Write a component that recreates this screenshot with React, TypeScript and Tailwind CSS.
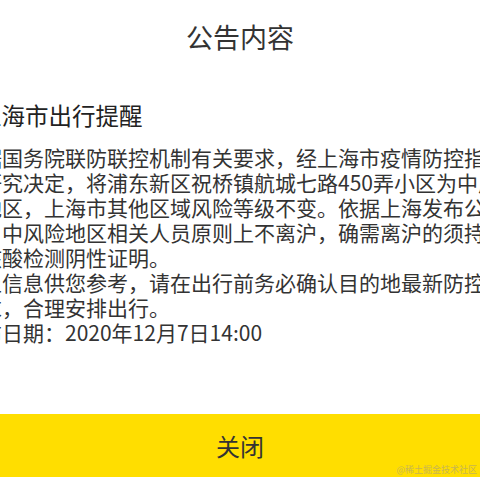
import React from "react";

const bodyLines = [
  "根据国务院联防联控机制有关要求，经上海市疫情防控指挥",
  "部研究决定，将浦东新区祝桥镇航城七路450弄小区为中风",
  "险地区，上海市其他区域风险等级不变。依据上海发布公",
  "告，中风险地区相关人员原则上不离沪，确需离沪的须持7天",
  "内核酸检测阴性证明。",
  "以上信息供您参考，请在出行前务必确认目的地最新防控",
  "要求，合理安排出行。",
  "发布日期：2020年12月7日14:00",
];

export default function App() {
  return (
    <div
      className="w-[480px] h-[480px] bg-white overflow-hidden flex flex-col text-[#333333]"
      style={{ fontFamily: '"Noto Sans CJK SC", "Noto Sans", sans-serif' }}
    >
      <div className="h-[72px] flex items-center justify-center text-[27px] leading-none text-[#333333]">
        公告内容
      </div>
      <div className="mt-[28px] ml-[-22px] text-[23.5px] leading-[30px] whitespace-nowrap text-[#222222]">
        上海市出行提醒
      </div>
      <div className="mt-[15px] ml-[-40px] text-[21px] leading-[25px] text-[#333333]">
        {bodyLines.map((l, i) => (
          <div key={i} className="whitespace-nowrap">
            {l}
          </div>
        ))}
      </div>
      <div className="mt-auto mb-[3px] relative h-[63px] bg-[#ffde00] flex items-center justify-center">
        <span className="text-[24px] leading-none text-[#333333]">关闭</span>
        <span className="absolute right-[3px] bottom-[3px] text-[9px] leading-none text-[#c9b650]">
          @稀土掘金技术社区
        </span>
      </div>
    </div>
  );
}
